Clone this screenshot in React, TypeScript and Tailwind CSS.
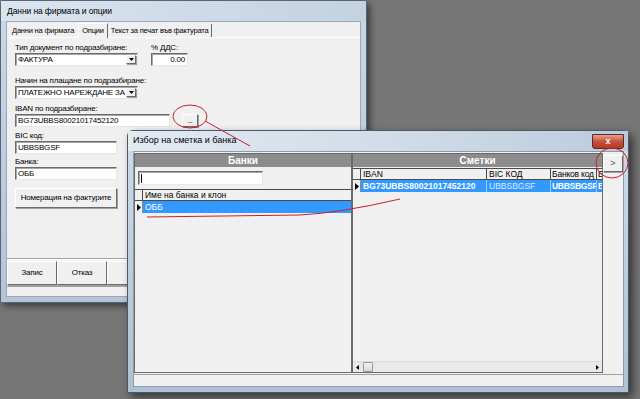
import React from 'react'

const sunken =
  'bg-white border border-t-[#6b6b6b] border-l-[#6b6b6b] border-b-[#e6e6e6] border-r-[#e6e6e6] shadow-[inset_1px_1px_0_#a6a6a6]'
const raised =
  'bg-[#f0f0f0] border border-t-white border-l-white border-b-[#6a6a6a] border-r-[#6a6a6a] shadow-[1px_1px_0_#a0a0a0]'

function Label({ children, className = '' }: { children: React.ReactNode; className?: string }) {
  return <div className={`h-[11px] leading-[11px] whitespace-nowrap ${className}`}>{children}</div>
}

function Edit({ children, className = '' }: { children?: React.ReactNode; className?: string }) {
  return (
    <div className={`h-[13px] flex items-center px-[2px] overflow-hidden whitespace-nowrap leading-none ${sunken} ${className}`}>
      {children}
    </div>
  )
}

function Combo({ children }: { children: React.ReactNode }) {
  return (
    <Edit className="w-[123px] pr-[1px]">
      <span className="flex-1 overflow-hidden whitespace-nowrap">{children}</span>
      <span className={`w-[10px] h-[9px] shrink-0 flex items-center justify-center ${raised}`}>
        <svg width="5" height="3" viewBox="0 0 5 3"><path d="M0 0h5L2.5 3z" fill="#000" /></svg>
      </span>
    </Edit>
  )
}

function RowMark() {
  return (
    <svg width="4" height="7" viewBox="0 0 4 7"><path d="M0 0l4 3.5L0 7z" fill="#000" /></svg>
  )
}

function MainWindow() {
  return (
    <div className="absolute left-0 top-0 w-[367px] h-[303px] flex flex-col rounded-t-[5px] border border-[#55667a] bg-gradient-to-b from-[#cad8e6] to-[#b4c4d6] shadow-[3px_3px_6px_rgba(0,0,0,0.5)]">
      <div className="h-[20px] shrink-0 flex items-center pl-[6px] text-[8.5px] tracking-[-0.1px] text-black bg-gradient-to-r from-[#dbe5ef] to-[#c3d2e1]">
        Данни на фирмата и опции
      </div>
      <div className="flex-1 mx-[5px] mb-[5px] bg-[#f0f0f0] border border-[#9aa8b8] flex flex-col min-h-0 text-[8px] tracking-[-0.2px]">
        {/* tabs */}
        <div className="h-[15px] shrink-0 flex items-end pl-[1px] text-[7.5px]">
          <div className="h-[13px] px-[4px] flex items-center whitespace-nowrap">Данни на фирмата</div>
          <div className="h-[15px] px-[3px] flex items-center border-t border-l border-white border-r border-r-[#6a6a6a] bg-[#f0f0f0] relative top-[1px]">
            Опции
          </div>
          <div className="h-[13px] px-[3px] flex items-center whitespace-nowrap border-r border-r-[#6a6a6a]">
            Текст за печат във фактурата
          </div>
        </div>
        {/* page */}
        <div className="flex-1 border-t border-white border-b border-b-[#a0a0a0] pl-[8px] pt-[4px] flex flex-col items-start">
          <div className="flex">
            <div className="w-[123px]">
              <Label>Тип документ по подразбиране:</Label>
              <Combo>ФАКТУРА</Combo>
            </div>
            <div className="ml-[13px]">
              <Label>% ДДС:</Label>
              <Edit className="w-[37px] justify-end">0.00</Edit>
            </div>
          </div>
          <Label className="mt-[9px]">Начин на плащане по подразбиране:</Label>
          <Combo>ПЛАТЕЖНО НАРЕЖДАНЕ ЗА НАЛОЖЕН ПЛАТЕЖ</Combo>
          <Label className="mt-[4px]">IBAN по подразбиране:</Label>
          <div className="flex items-center">
            <Edit className="w-[155px]">BG73UBBS80021017452120</Edit>
            <div className={`ml-[12px] w-[16px] h-[13px] flex items-center justify-center leading-none text-[7px] ${raised}`}>...</div>
          </div>
          <Label className="mt-[3px]">BIC код:</Label>
          <Edit className="w-[102px]">UBBSBGSF</Edit>
          <Label className="mt-[2px]">Банка:</Label>
          <Edit className="w-[102px]">ОББ</Edit>
          <div className={`mt-[8px] w-[102px] h-[20px] flex items-center justify-center whitespace-nowrap ${raised}`}>
            Номерация на фактурите
          </div>
        </div>
        {/* bottom buttons */}
        <div className="h-[27px] shrink-0 flex items-end pb-[1px] border-t border-t-white">
          <div className={`w-[50px] h-[24px] flex items-center justify-center ${raised}`}>Запис</div>
          <div className={`w-[50px] h-[24px] flex items-center justify-center ${raised}`}>Отказ</div>
          <div className={`w-[50px] h-[24px] flex items-center justify-center ${raised}`}></div>
        </div>
        <div className="h-[10px] shrink-0 border-t border-t-[#a0a0a0]"></div>
      </div>
    </div>
  )
}

function PanelHeader({ children }: { children: React.ReactNode }) {
  return (
    <div className="h-[13px] shrink-0 bg-[#8c8c8c] flex items-center justify-center text-white font-bold text-[10px] leading-none">
      {children}
    </div>
  )
}

function Dialog() {
  return (
    <div className="absolute left-[127px] top-[130px] w-[502px] h-[263px] flex flex-col rounded-t-[6px] border border-[#4a5a6e] bg-gradient-to-b from-[#cfdbe8] to-[#afc0d3] shadow-[4px_4px_8px_rgba(0,0,0,0.55)]">
      <div className="h-[20px] shrink-0 relative flex items-center pl-[5px] text-[9px] text-black bg-gradient-to-r from-[#e2eaf2] via-[#d2dde9] to-[#bccbdb]">
        Избор на сметка и банка
        <div className="absolute left-[464px] top-[3px] w-[32px] h-[15px] rounded-b-[3px] border border-[#5b2a24] bg-gradient-to-b from-[#e6a08f] via-[#c9503c] to-[#b23a24] flex items-center justify-center text-white font-bold text-[9px] leading-none">
          x
        </div>
      </div>
      <div className="flex-1 ml-[5px] mr-[4px] mb-[5px] bg-[#f0f0f0] border border-[#8c9bab] flex flex-col min-h-0">
        <div className="flex-1 flex pt-[1px] min-h-0">
          {/* banks */}
          <div className="w-[218px] border border-[#6a6a6a] flex flex-col">
            <PanelHeader>Банки</PanelHeader>
            <div className="pt-[4px] pb-[4px] pl-[3px]">
              <Edit className="w-[125px] h-[14px]">
                <span className="w-px h-[9px] bg-black"></span>
              </Edit>
            </div>
            <div className="h-[12px] flex border-t border-b border-[#4a4a4a]">
              <div className="w-[8px] border-r border-[#4a4a4a]"></div>
              <div className="flex-1 pl-[2px] flex items-center leading-none">Име на банка и клон</div>
            </div>
            <div className="h-[12px] flex">
              <div className="w-[8px] flex items-center justify-center border-r border-[#8a8a8a]"><RowMark /></div>
              <div className="flex-1 bg-[#3399ff] text-white pl-[2px] flex items-center leading-none">ОББ</div>
            </div>
            <div className="flex-1"></div>
          </div>
          {/* accounts */}
          <div className="w-[251px] border border-[#6a6a6a] flex flex-col">
            <PanelHeader>Сметки</PanelHeader>
            <div className="h-[12px] mt-[1px] flex border-t border-b border-[#4a4a4a] leading-none">
              <div className="w-[8px] border-r border-[#4a4a4a]"></div>
              <div className="w-[126px] pl-[2px] flex items-center border-r border-[#4a4a4a]">IBAN</div>
              <div className="w-[64px] pl-[2px] flex items-center border-r border-[#4a4a4a]">BIC КОД</div>
              <div className="w-[46px] pl-[1px] flex items-center border-r border-[#4a4a4a] whitespace-nowrap overflow-hidden tracking-[-0.2px]">Банков код</div>
              <div className="flex-1 pl-[1px] flex items-center overflow-hidden">Б</div>
            </div>
            <div className="h-[12px] flex leading-none text-white">
              <div className="w-[8px] flex items-center justify-center border-r border-[#8a8a8a] text-black"><RowMark /></div>
              <div className="w-[126px] bg-[#3399ff] pl-[2px] flex items-center font-bold border-r border-[#9ccaff]">BG73UBBS80021017452120</div>
              <div className="w-[64px] bg-[#3399ff] pl-[2px] flex items-center text-[#dcecff] border-r border-[#9ccaff]">UBBSBGSF</div>
              <div className="w-[46px] bg-[#3399ff] pl-[1px] flex items-center font-bold border-r border-[#9ccaff] overflow-hidden whitespace-nowrap tracking-[-0.3px]">UBBSBGSF</div>
              <div className="flex-1 bg-[#3399ff] pl-[1px] flex items-center font-bold overflow-hidden">B</div>
            </div>
            <div className="flex-1"></div>
            <div className="h-[11px] flex items-center bg-[#e9e9e9] border-t border-[#dcdcdc] px-[3px]">
              <svg width="3" height="5" viewBox="0 0 3 5"><path d="M3 0v5L0 2.5z" fill="#000" /></svg>
              <div className="ml-[4px] w-[10px] h-[10px] rounded-[1px] border border-[#9a9a9a] bg-gradient-to-b from-[#f6f6f6] to-[#d6d6d6]"></div>
              <div className="flex-1"></div>
              <svg width="3" height="5" viewBox="0 0 3 5"><path d="M0 0v5l3-2.5z" fill="#000" /></svg>
            </div>
          </div>
          <div className="flex-1 pt-[2px]">
            <div className={`w-[20px] h-[17px] flex items-center justify-center text-[#555] text-[9px] leading-none ${raised}`}>&gt;</div>
          </div>
        </div>
        <div className="h-[12px] shrink-0 border-t border-[#a0a0a0] mt-[1px]"></div>
      </div>
    </div>
  )
}

export default function App() {
  return (
    <div className="relative w-[640px] h-[399px] overflow-hidden bg-[#767676] text-[8.5px] text-black font-['Liberation_Sans',Arial,sans-serif]">
      <MainWindow />
      <Dialog />
      <svg className="absolute inset-0 pointer-events-none" width="640" height="399" viewBox="0 0 640 399">
        <g fill="none" stroke="#c8202a" strokeWidth="1">
          <ellipse cx="190" cy="116.5" rx="17" ry="11.5" />
          <path d="M205 121L250 146" />
          <path d="M147 217L300 215Q340 213 400 199" />
          <ellipse cx="612" cy="163" rx="16" ry="15" />
        </g>
      </svg>
    </div>
  )
}
